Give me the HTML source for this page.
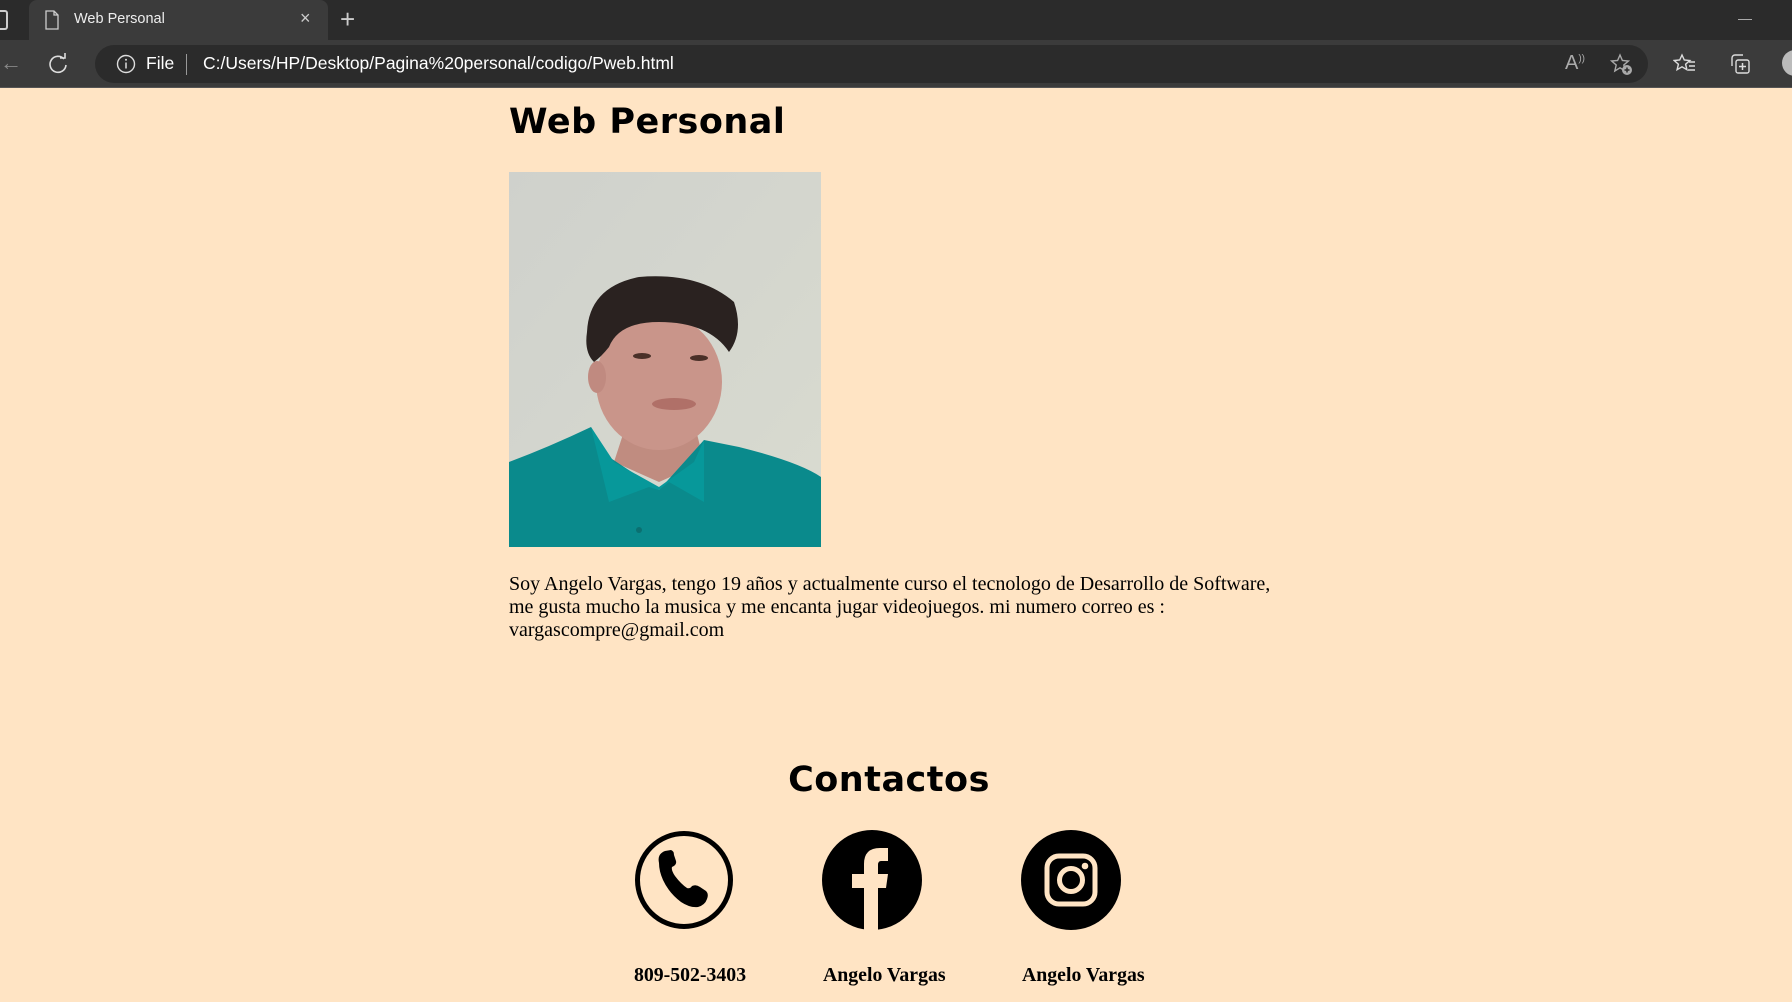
<!DOCTYPE html>
<html><head><meta charset="utf-8"><style>
*{margin:0;padding:0;box-sizing:border-box}
body{width:1792px;height:1002px;overflow:hidden;background:#ffe4c4;position:relative;font-family:"Liberation Serif",serif}
.abs{position:absolute}
#tabs{left:0;top:0;width:1792px;height:40px;background:#2b2b2b}
#tab{left:29px;top:0;width:299px;height:42px;background:#3b3b3b;border-radius:8px 8px 0 0}
#bar{left:0;top:40px;width:1792px;height:48px;background:#3b3b3b;border-bottom:1px solid #555}
#addr{left:95px;top:45px;width:1553px;height:38px;background:#2b2b2b;border-radius:19px}
.ui{font-family:"Liberation Sans",sans-serif;color:#fff}
h1{position:absolute;left:509px;top:102px;font-family:"DejaVu Sans",sans-serif;font-weight:bold;font-size:35px;color:#000;letter-spacing:0.5px}
h2{position:absolute;left:509px;width:760px;text-align:center;top:760px;font-family:"DejaVu Sans",sans-serif;font-weight:bold;font-size:35px;color:#000;letter-spacing:0.5px}
p{position:absolute;left:509px;top:573px;width:775px;font-size:20px;line-height:23px;color:#000}
.lbl{position:absolute;top:964px;font-weight:bold;font-size:19.8px;color:#000}
</style></head><body>
<div id="tabs" class="abs"></div>
<div class="abs" style="left:0;top:10px;width:8px;height:20px;border:2px solid #ccc;border-left:none;border-radius:0 3px 3px 0"></div>
<div id="tab" class="abs"></div>
<svg class="abs" style="left:44px;top:10px" width="16" height="20"><path d="M2 1h8l4 4v14H2z M10 1v4h4" fill="none" stroke="#ccc" stroke-width="1.3"/></svg>
<div class="abs ui" style="left:74px;top:11px;font-size:14.5px;color:#eee">Web Personal</div>
<div class="abs ui" style="left:300px;top:8px;font-size:18px;color:#ccc">×</div>
<div class="abs ui" style="left:340px;top:4px;font-size:26px;color:#ccc;font-weight:300">+</div>
<div class="abs" style="left:1738px;top:19px;width:14px;height:1px;background:#aaa"></div>
<div id="bar" class="abs"></div>
<div class="abs ui" style="left:0;top:50px;font-size:22px;color:#888">←</div>
<svg class="abs" style="left:47px;top:53px" width="22" height="22"><path d="M17 6A8 8 0 1 0 19 12" fill="none" stroke="#ddd" stroke-width="1.6"/><path d="M13 5h5V0" fill="none" stroke="#ddd" stroke-width="1.6"/></svg>
<div id="addr" class="abs"></div>
<svg class="abs" style="left:116px;top:54px" width="20" height="20"><circle cx="10" cy="10" r="8.5" fill="none" stroke="#ddd" stroke-width="1.4"/><path d="M10 8.5v6" stroke="#ddd" stroke-width="1.5"/><circle cx="10" cy="5.8" r="1" fill="#ddd"/></svg>
<div class="abs ui" style="left:146px;top:53px;font-size:17.5px">File</div>
<div class="abs" style="left:186px;top:54px;width:1px;height:21px;background:#999"></div>
<div class="abs ui" style="left:203px;top:53px;font-size:17.5px">C:/Users/HP/Desktop/Pagina%20personal/codigo/Pweb.html</div>
<div class="abs ui" style="left:1565px;top:52px;font-size:20px;color:#aaa">A<sup style="font-size:10px">))</sup></div>
<svg class="abs" style="left:1610px;top:53px" width="24" height="24"><path d="M10 2l2.4 5.5 6 .5-4.6 4 1.4 6-5.2-3.2-5.2 3.2 1.4-6L1.6 8l6-.5z" fill="none" stroke="#aaa" stroke-width="1.4"/><circle cx="17" cy="17" r="5" fill="#aaa"/><path d="M17 14.5v5M14.5 17h5" stroke="#2b2b2b" stroke-width="1.5"/></svg>
<svg class="abs" style="left:1673px;top:53px" width="24" height="22"><path d="M9 2l2.3 5 5.5.5-4.2 3.7 1.3 5.5L9 13.8 4.1 16.7 5.4 11.2 1.2 7.5l5.5-.5z" fill="none" stroke="#ddd" stroke-width="1.4"/><path d="M16 9h6M16 13h6M15 17h7" stroke="#ddd" stroke-width="1.4"/></svg>
<svg class="abs" style="left:1728px;top:52px" width="24" height="24"><path d="M4 14V6a3 3 0 0 1 3-3h8" fill="none" stroke="#ddd" stroke-width="1.4"/><rect x="8" y="8" width="13" height="13" rx="2" fill="none" stroke="#ddd" stroke-width="1.4"/><path d="M14.5 11v7M11 14.5h7" stroke="#ddd" stroke-width="1.5"/></svg>
<div class="abs" style="left:1782px;top:50px;width:26px;height:26px;border-radius:50%;background:#bbb"></div>

<h1>Web Personal</h1>
<svg class="abs" style="left:509px;top:172px" width="312" height="375" viewBox="0 0 312 375">
<defs><linearGradient id="w" x1="0" y1="0" x2="1" y2="1"><stop offset="0" stop-color="#cfd1cc"/><stop offset="1" stop-color="#d9dbd0"/></linearGradient></defs>
<rect width="312" height="375" fill="url(#w)"/>
<path d="M118 250 L185 250 L195 290 L150 310 L105 290Z" fill="#c08c80"/>
<ellipse cx="150" cy="210" rx="63" ry="68" fill="#c9958a"/>
<ellipse cx="88" cy="205" rx="9" ry="16" fill="#c08a80"/>
<path d="M78 160 Q80 115 130 105 Q190 100 225 130 Q235 160 220 180 Q200 150 150 150 Q110 150 100 175 Q92 185 85 190 Q75 180 78 160Z" fill="#2a2220"/>
<ellipse cx="133" cy="184" rx="9" ry="3" fill="#4a3028"/><ellipse cx="190" cy="186" rx="9" ry="3" fill="#4a3028"/>
<ellipse cx="165" cy="232" rx="22" ry="6" fill="#b07068"/>
<path d="M0 290 Q40 275 82 255 L100 285 L150 318 L195 268 L230 275 Q290 290 312 305 L312 375 L0 375Z" fill="#0a8a8c"/>
<path d="M82 255 L100 330 L140 315 L150 318 L160 310 L195 330 L195 268 L185 290 L150 315 L105 290Z" fill="#07989a"/>
<circle cx="130" cy="358" r="3" fill="#0b7071"/>
</svg>
<p>Soy Angelo Vargas, tengo 19 años y actualmente curso el tecnologo de Desarrollo de Software, me gusta mucho la musica y me encanta jugar videojuegos. mi numero correo es : vargascompre@gmail.com</p>
<h2>Contactos</h2>
<svg class="abs" style="left:634px;top:830px" width="100" height="100" viewBox="0 0 100 100">
<circle cx="50" cy="50" r="46.5" fill="none" stroke="#000" stroke-width="5"/>
<path d="M25 33 Q23 24 31 21 L37 20 Q40 21 40 25 L42 31 Q43 35 38 37 Q37 40 41 46 Q47 54 53 58 Q56 59 58 56 Q62 54 66 57 L72 61 Q75 64 73 69 Q71 75 64 77 Q56 78 47 72 Q35 63 29 50 Q25 41 25 33Z" fill="#000"/>
</svg>
<svg class="abs" style="left:822px;top:830px" width="100" height="100" viewBox="0 0 100 100">
<circle cx="50" cy="50" r="50" fill="#000"/>
<path d="M42 100 V58 H30 V44 H42 V34 Q42 18 58 18 H66 V31 H59 Q56 31 56 35 V44 H66 L64 58 H56 V100Z" fill="#ffe4c4"/>
</svg>
<svg class="abs" style="left:1021px;top:830px" width="100" height="100" viewBox="0 0 100 100">
<circle cx="50" cy="50" r="50" fill="#000"/>
<rect x="26" y="26" width="48" height="48" rx="12" fill="none" stroke="#ffe4c4" stroke-width="5"/>
<circle cx="50" cy="50" r="11.5" fill="none" stroke="#ffe4c4" stroke-width="5"/>
<circle cx="64" cy="36" r="3.3" fill="#ffe4c4"/>
</svg>
<div class="lbl" style="left:634px">809-502-3403</div>
<div class="lbl" style="left:823px">Angelo Vargas</div>
<div class="lbl" style="left:1022px">Angelo Vargas</div>
</body></html>
